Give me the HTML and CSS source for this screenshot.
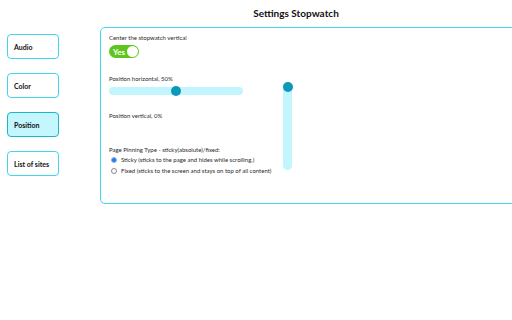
FILE: index.html
```html
<!DOCTYPE html>
<html lang="en">
  <head>
    <meta charset="utf-8">
    <title>Settings Stopwatch</title>
    <meta name="viewport" content="width=device-width, initial-scale=1.0">
    <link rel="stylesheet" href="styles.css">
  </head>
  <body>
    <nav class="menu">
      <button class="menu-item" type="button">Audio</button>
      <button class="menu-item" type="button">Color</button>
      <button class="menu-item active" type="button">Position</button>
      <button class="menu-item" type="button">List of sites</button>
    </nav>

    <main class="content">
      <h1 class="title">Settings Stopwatch</h1>

      <section class="panel">
        <div class="options">
          <p class="label">Center the stopwatch vertical</p>
          <div class="toggle">
            <span class="toggle-text">Yes</span>
            <span class="toggle-knob"></span>
          </div>

          <p class="label label-gap">Position horizontal, 50%</p>
          <div class="slider">
            <span class="slider-thumb"></span>
          </div>

          <p class="label label-gap">Position vertical, 0%</p>

          <p class="label pinning">Page Pinning Type - sticky(absolute)/fixed:</p>
          <div class="radio-row">
            <span class="radio checked"></span>
            <span class="radio-text">Sticky (sticks to the page and hides while scrolling.)</span>
          </div>
          <div class="radio-row">
            <span class="radio"></span>
            <span class="radio-text">Fixed (sticks to the screen and stays on top of all content)</span>
          </div>
        </div>

        <div class="vslider">
          <span class="vslider-thumb"></span>
        </div>
      </section>
    </main>
  </body>
</html>
```

FILE: styles.css
```css
html {
  box-sizing: border-box;
}

*,
*:before,
*:after {
  box-sizing: inherit;
}

body {
  margin: 0;
  width: 512px;
  height: 320px;
  overflow: hidden;
  display: flex;
  background: #fff;
  color: #1a1a1a;
  font-family: Lato, "Open Sans", sans-serif;
}

/* left menu */
.menu {
  display: flex;
  flex-direction: column;
  gap: 14px;
  width: 100px;
  flex-shrink: 0;
  padding: 34px 0 0 7px;
}

.menu-item {
  width: 52px;
  height: 25px;
  padding: 0 0 0 6px;
  border: 1px solid #3fd6ee;
  border-radius: 4px;
  background: #fff;
  color: #111;
  font-family: inherit;
  font-size: 7px;
  font-weight: 700;
  text-align: left;
}

.menu-item.active {
  background: #c3f6fd;
  border-color: #1db4cc;
}

/* right side */
.content {
  flex-shrink: 0;
  width: 430px;
}

.title {
  margin: 0;
  height: 27px;
  padding-right: 38px;
  line-height: 27px;
  text-align: center;
  font-size: 10px;
  font-weight: 700;
  color: #111;
}

.panel {
  display: flex;
  height: 177px;
  padding: 6px 0 0 8px;
  border: 1px solid #3fd6ee;
  border-radius: 5px;
}

.options {
  width: 174px;
  flex-shrink: 0;
}

.label {
  margin: 0;
  height: 8px;
  line-height: 8px;
  font-size: 6px;
  color: #2a2a2a;
  white-space: nowrap;
}

.label-gap {
  margin-top: 17px;
}

.pinning {
  margin-top: 26px;
}

/* toggle */
.toggle {
  position: relative;
  display: flex;
  align-items: center;
  width: 30px;
  height: 13px;
  margin-top: 3px;
  padding-left: 4px;
  border-radius: 7px;
  background: #5cc61e;
}

.toggle-text {
  font-size: 8px;
  font-weight: 700;
  line-height: 1;
  color: #fff;
}

.toggle-knob {
  position: absolute;
  top: 1px;
  right: 1px;
  width: 11px;
  height: 11px;
  border-radius: 50%;
  background: #fff;
}

/* sliders */
.slider {
  position: relative;
  width: 134px;
  height: 8px;
  margin-top: 4px;
  border-radius: 4px;
  background: #c2f5fd;
}

.slider-thumb {
  position: absolute;
  top: -1px;
  left: 62px;
  width: 10px;
  height: 10px;
  border-radius: 50%;
  background: #0b99b7;
}

.vslider {
  position: relative;
  width: 9px;
  height: 88px;
  margin-top: 48px;
  border-radius: 5px;
  background: #c2f5fd;
}

.vslider-thumb {
  position: absolute;
  top: 0;
  left: 0;
  width: 10px;
  height: 10px;
  border-radius: 50%;
  background: #0b99b7;
}

/* radios */
.radio-row {
  display: flex;
  align-items: center;
  height: 11px;
  white-space: nowrap;
}

.radio-row:first-of-type {
  margin-top: 2px;
}

.radio {
  width: 6px;
  height: 6px;
  margin: 0 4px 0 2px;
  border: 1px solid #888;
  border-radius: 50%;
  background: #fff;
}

.radio.checked {
  border-color: #8ab8f0;
  background: #2a78e4;
}

.radio-text {
  font-size: 6px;
  color: #2a2a2a;
}
```
